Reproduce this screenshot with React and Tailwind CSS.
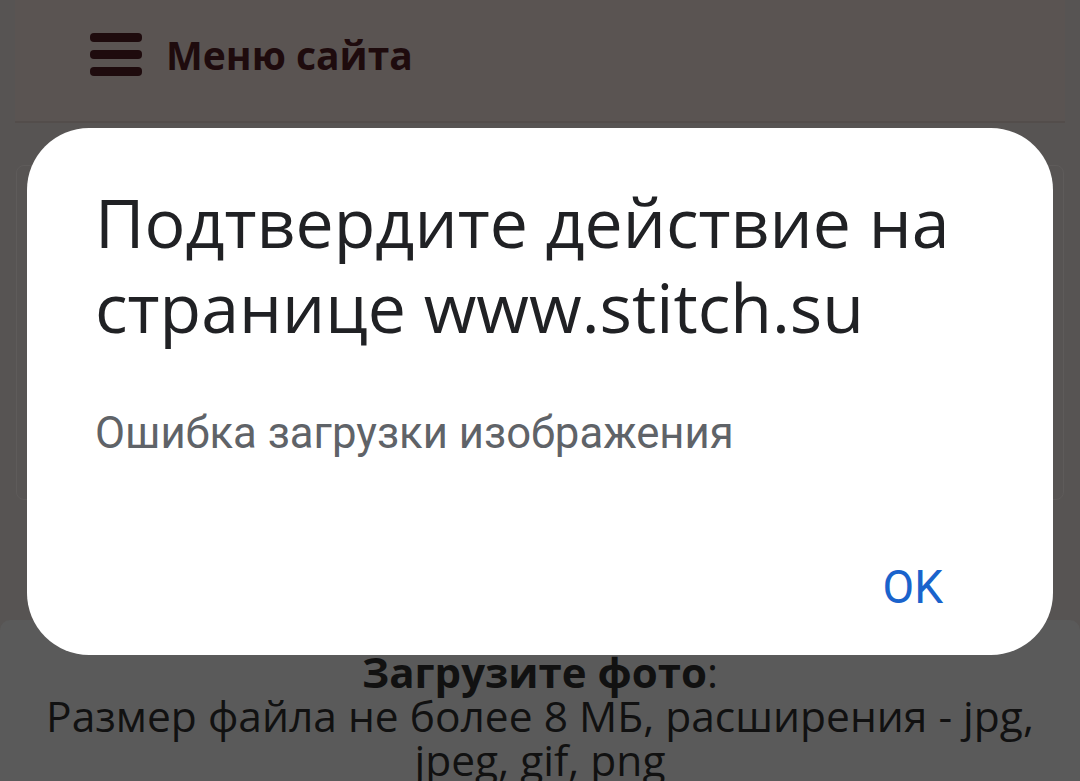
export default function App() {
  return (
    <div className="relative w-[1080px] h-[781px] overflow-hidden bg-[#575453] font-['Open_Sans',sans-serif]">
      {/* site header */}
      <div className="mx-[15px] h-[123px] bg-[#5a5452] border-b-2 border-[#534d4b] flex items-center pb-[13px] pl-[75px] gap-[24px]">
        <div className="flex flex-col gap-[8px] w-[52px]">
          <span className="block h-[9px] rounded-[4px] bg-[#1e0b0d]" />
          <span className="block h-[9px] rounded-[4px] bg-[#1e0b0d]" />
          <span className="block h-[9px] rounded-[4px] bg-[#1e0b0d]" />
        </div>
        <span className="text-[39px] font-bold text-[#1e0b0d] leading-none">Меню сайта</span>
      </div>

      {/* form card behind */}
      <div className="mx-[16px] mt-[42px] h-[335px] rounded-[8px] border border-[#5e5b5a]" />

      {/* upload block */}
      <div className="mt-[120px] h-[200px] rounded-t-[10px] bg-[#5a5a5a] px-[20px] pt-[30px] text-center text-[#111] text-[42px] leading-[44px]">
        <div>
          <b className="font-bold">Загрузите фото</b>:
        </div>
        <div className="text-[42.5px]">Размер файла не более 8 МБ, расширения - jpg, jpeg, gif, png</div>
      </div>

      {/* browser alert */}
      <div className="absolute left-[27px] top-[128px] w-[1026px] h-[527px] rounded-[62px] bg-white pl-[68px] pr-[60px] pt-[51px] flex flex-col">
        <h1 className="text-[68px] leading-[85px] text-[#202124] font-normal">
          Подтвердите действие на странице www.stitch.su
        </h1>
        <p className="mt-[58px] font-['Roboto',sans-serif] text-[43.7px] leading-[52px] text-[#5f6368]">
          Ошибка загрузки изображения
        </p>
        <div className="mt-auto mb-[41px] flex justify-end pr-[50px]">
          <span className="font-['Roboto',sans-serif] font-normal text-[46px] leading-[54px] text-[#1a63cc]">OK</span>
        </div>
      </div>
    </div>
  );
}
